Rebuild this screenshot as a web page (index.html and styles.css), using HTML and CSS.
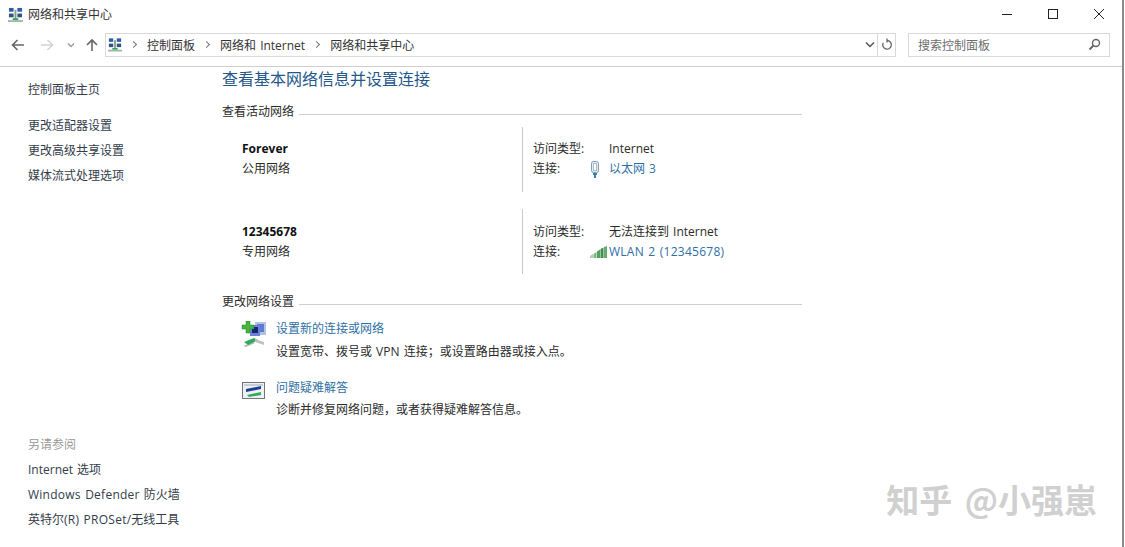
FILE: index.html
```html
<!DOCTYPE html>
<html lang="zh-CN">
    <head>
        <meta charset="utf-8">
        <title>网络和共享中心</title>
        <link rel="stylesheet" href="styles.css">
    </head>
    <body>
        <svg class="defs" width="0" height="0">
            <symbol id="netIcon" viewBox="0 0 16 16">
                <rect x="1" y="1" width="5" height="4" fill="#2f5fa8"/>
                <rect x="10" y="1" width="5" height="4" fill="#2f5fa8"/>
                <rect x="1" y="7" width="5" height="4" fill="#34517f"/>
                <rect x="10" y="7" width="5" height="4" fill="#34517f"/>
                <rect x="7" y="3" width="2" height="10" fill="#7d9a8a"/>
                <rect x="5" y="12" width="6" height="2" fill="#2fa35a"/>
                <rect x="0" y="14" width="16" height="2" fill="#9fb8a8"/>
            </symbol>
        </svg>

        <div class="window">
            <div class="titleBar">
                <svg class="appIcon"><use href="#netIcon"/></svg>
                <span class="titleText">网络和共享中心</span>
                <div class="winButtons">
                    <svg width="12" height="12" viewBox="0 0 12 12"><path d="M1 6.500h10" stroke="#222" fill="none"/></svg>
                    <svg width="12" height="12" viewBox="0 0 12 12"><rect x="1.500" y="1.500" width="9" height="9" stroke="#222" fill="none"/></svg>
                    <svg width="12" height="12" viewBox="0 0 12 12"><path d="M1 1l10 10M11 1L1 11" stroke="#222" fill="none"/></svg>
                </div>
            </div>

            <div class="addressRow">
                <div class="navButtons">
                    <svg class="navBack" width="14" height="12" viewBox="0 0 14 12"><path d="M13 6H2M6.500 1L1.500 6l5 5" stroke="#666" stroke-width="1.600" fill="none"/></svg>
                    <svg class="navForward" width="14" height="12" viewBox="0 0 14 12"><path d="M1 6h11M7.500 1l5 5-5 5" stroke="#d4d4d4" stroke-width="1.600" fill="none"/></svg>
                    <svg class="navDrop" width="8" height="6" viewBox="0 0 8 6"><path d="M1 1.500l3 3 3-3" stroke="#999" stroke-width="1.300" fill="none"/></svg>
                    <svg class="navUp" width="12" height="14" viewBox="0 0 12 14"><path d="M6 13V2M1 7l5-5 5 5" stroke="#666" stroke-width="1.600" fill="none"/></svg>
                </div>
                <div class="addressBox">
                    <svg class="crumbIcon"><use href="#netIcon"/></svg>
                    <span class="chevron"></span>
                    <span>控制面板</span>
                    <span class="chevron"></span>
                    <span>网络和 Internet</span>
                    <span class="chevron"></span>
                    <span>网络和共享中心</span>
                    <div class="addressEnd">
                        <svg class="addressDrop" width="10" height="7" viewBox="0 0 10 7"><path d="M1 1.500l4 4 4-4" stroke="#555" stroke-width="1.500" fill="none"/></svg>
                        <div class="refresh">
                            <svg width="12" height="13" viewBox="0 0 12 13"><path d="M6 2.500a4.300 4.300 0 1 1-3.800 2.400M6 .5v4" stroke="#666" stroke-width="1.300" fill="none"/></svg>
                        </div>
                    </div>
                </div>
                <div class="searchBox">
                    <span>搜索控制面板</span>
                    <svg width="13" height="13" viewBox="0 0 13 13"><circle cx="8" cy="5" r="3.500" stroke="#666" stroke-width="1.400" fill="none"/><path d="M5.500 7.500L1.500 11.500" stroke="#666" stroke-width="2" fill="none"/></svg>
                </div>
            </div>

            <div class="content">
                <div class="sidebar">
                    <ul class="sideList">
                        <li class="sideHome">控制面板主页</li>
                        <li>更改适配器设置</li>
                        <li>更改高级共享设置</li>
                        <li>媒体流式处理选项</li>
                    </ul>
                    <ul class="sideList sideBottom">
                        <li class="sideLabel">另请参阅</li>
                        <li>Internet 选项</li>
                        <li><span class="wide">Windows Defender</span> 防火墙</li>
                        <li>英特尔<span class="wide">(R) PROSet/</span>无线工具</li>
                    </ul>
                </div>

                <div class="main">
                    <h1 class="pageTitle">查看基本网络信息并设置连接</h1>

                    <div class="sectionHead">
                        <span>查看活动网络</span>
                        <div class="sectionLine"></div>
                    </div>

                    <div class="networks">
                        <div class="network">
                            <div class="netName">
                                <strong>Forever</strong>
                                <span>公用网络</span>
                            </div>
                            <div class="netInfo">
                                <div class="infoRow">
                                    <span class="infoLabel">访问类型:</span>
                                    <span class="infoIcon"></span>
                                    <span>Internet</span>
                                </div>
                                <div class="infoRow">
                                    <span class="infoLabel">连接:</span>
                                    <span class="infoIcon">
                                        <svg width="10" height="17" viewBox="0 0 10 17">
                                            <rect x="1.500" y="0.500" width="7" height="11" rx="2" fill="#e4edf3" stroke="#7f9db3"/>
                                            <rect x="3.500" y="2.500" width="3" height="7" fill="#fff" stroke="#a9bdcb"/>
                                            <rect x="3" y="12" width="4" height="2" fill="#3f7fa8"/>
                                            <rect x="4" y="14" width="2" height="3" fill="#2b86b8"/>
                                        </svg>
                                    </span>
                                    <a class="link">以太网 3</a>
                                </div>
                            </div>
                        </div>

                        <div class="network">
                            <div class="netName">
                                <strong>12345678</strong>
                                <span>专用网络</span>
                            </div>
                            <div class="netInfo">
                                <div class="infoRow">
                                    <span class="infoLabel">访问类型:</span>
                                    <span class="infoIcon"></span>
                                    <span>无法连接到 Internet</span>
                                </div>
                                <div class="infoRow">
                                    <span class="infoLabel">连接:</span>
                                    <span class="infoIcon">
                                        <svg width="17" height="12" viewBox="0 0 17 12">
                                            <path d="M0 10l3-2v4H0z" fill="#a9cfae"/>
                                            <path d="M3.500 8l3-2v6h-3z" fill="#7cb585"/>
                                            <path d="M7 5.500l3-2V12H7z" fill="#549f60"/>
                                            <path d="M10.500 3l3-1.500V12h-3z" fill="#3f8f4c"/>
                                            <path d="M14 1l3-1v12h-3z" fill="#67a873"/>
                                        </svg>
                                    </span>
                                    <a class="link wide">WLAN 2 (12345678)</a>
                                </div>
                            </div>
                        </div>
                    </div>

                    <div class="sectionHead sectionChange">
                        <span>更改网络设置</span>
                        <div class="sectionLine"></div>
                    </div>

                    <div class="tasks">
                        <div class="task">
                            <svg class="taskIcon" width="26" height="26" viewBox="0 0 26 26">
                                <rect x="14" y="1" width="11" height="13" fill="#b4c1ea"/>
                                <rect x="16" y="3" width="7" height="8" fill="#5f7ad0"/>
                                <rect x="9" y="4" width="10" height="11" fill="#6a82cf"/>
                                <rect x="11" y="6" width="6" height="6" fill="#14247a"/>
                                <path d="M5 0h4v4h4v4H9v4H5V8H1V4h4z" fill="#45b53f" stroke="#2b7f2b" stroke-width="0.500"/>
                                <path d="M2 25l10-4 2 1-9 4z" fill="#b4bbb7"/>
                                <path d="M3 21l10-4 4 2-10 5z" fill="#35a860"/>
                                <path d="M14 18l9 3v3l-9-3z" fill="#bcc3c7"/>
                            </svg>
                            <div class="taskText">
                                <a class="link">设置新的连接或网络</a>
                                <p>设置宽带、拨号或 VPN 连接；或设置路由器或接入点。</p>
                            </div>
                        </div>
                        <div class="task">
                            <svg class="taskIcon taskIconSmall" width="26" height="18" viewBox="0 0 26 18">
                                <rect x="1.500" y="0.500" width="22" height="16" fill="#eef0f3" stroke="#70757b"/>
                                <rect x="3" y="2" width="19" height="2" fill="#c9ced6"/>
                                <path d="M5 7l15-3v3L5 10z" fill="#1c3f96"/>
                                <path d="M6 13l14-3v3L8 15z" fill="#36a85e"/>
                            </svg>
                            <div class="taskText">
                                <a class="link">问题疑难解答</a>
                                <p>诊断并修复网络问题，或者获得疑难解答信息。</p>
                            </div>
                        </div>
                    </div>
                </div>
            </div>

            <div class="watermark">知乎 @小强崽</div>
        </div>
    </body>
</html>
```

FILE: styles.css
```css
html, body {
    margin: 0;
    padding: 0;
    height: 547px;
    overflow: hidden;
    background-color: #fff;
    color: #2b2b2b;
    font-family: "Open Sans", "Noto Sans CJK SC", sans-serif;
    font-size: 12px;
    word-spacing: 1px;
}

.defs {
    position: absolute;
}

.wide {
    letter-spacing: 0.25px;
}

.window {
    position: relative;
    display: flex;
    flex-direction: column;
    box-sizing: border-box;
    width: 1124px;
    height: 547px;
    border-right: 2px solid #8a8a8a;
}

/* title bar */
.titleBar {
    display: flex;
    align-items: center;
    height: 28px;
    padding-left: 8px;
}

.appIcon {
    width: 15px;
    height: 15px;
    margin-right: 5px;
}

.titleText {
    color: #333;
}

.winButtons {
    display: flex;
    gap: 34px;
    margin-left: auto;
    margin-right: 17px;
}

/* address row */
.addressRow {
    display: flex;
    align-items: center;
    box-sizing: border-box;
    height: 39px;
    padding: 5px 0 10px 11px;
    border-bottom: 1px solid #cfcfcf;
}

.navButtons {
    display: flex;
    align-items: center;
    width: 94px;
}

.navBack {
    margin-right: 15px;
}

.navForward {
    margin-right: 13px;
}

.navDrop {
    margin-right: 11px;
}

.addressBox {
    display: flex;
    align-items: center;
    box-sizing: border-box;
    width: 791px;
    height: 24px;
    padding-left: 2px;
    border: 1px solid #d9d9d9;
    color: #333;
}

.crumbIcon {
    width: 14px;
    height: 15px;
}

.chevron {
    width: 4px;
    height: 4px;
    margin: 0 11px 0 9px;
    border-top: 1px solid #777;
    border-right: 1px solid #777;
    transform: rotate(45deg);
}

.addressEnd {
    display: flex;
    align-items: center;
    height: 100%;
    margin-left: auto;
}

.addressDrop {
    margin-right: 2px;
}

.refresh {
    display: flex;
    align-items: center;
    justify-content: center;
    width: 17px;
    height: 100%;
    border-left: 1px solid #d9d9d9;
}

.searchBox {
    display: flex;
    align-items: center;
    justify-content: space-between;
    box-sizing: border-box;
    width: 202px;
    height: 24px;
    margin-left: 12px;
    padding: 0 8px 0 9px;
    border: 1px solid #d9d9d9;
    color: #6d6d6d;
}

/* content */
.content {
    display: flex;
    flex: 1;
}

.sidebar {
    display: flex;
    flex-direction: column;
    box-sizing: border-box;
    width: 222px;
    padding: 10px 0 15px 28px;
}

.sideList {
    margin: 0;
    padding: 0;
    list-style: none;
    line-height: 25px;
    color: #333c4a;
}

.sideHome {
    margin-bottom: 11px;
}

.sideBottom {
    margin-top: auto;
}

.sideLabel {
    color: #9a9a9a;
}

.main {
    width: 580px;
}

.pageTitle {
    margin: 0;
    color: #24578a;
    font-size: 16px;
    font-weight: normal;
    line-height: 24px;
}

.sectionHead {
    display: flex;
    align-items: center;
    margin-top: 11px;
    line-height: 20px;
}

.sectionLine {
    flex: 1;
    height: 1px;
    margin: 4px 0 0 5px;
    background-color: #cfcfcf;
}

.networks {
    display: flex;
    flex-direction: column;
    gap: 17px;
    margin-top: 5px;
}

.network {
    display: grid;
    grid-template-columns: 300px 1fr;
    height: 65px;
}

.netName {
    display: flex;
    flex-direction: column;
    padding: 12px 0 0 20px;
    line-height: 20px;
}

.netName strong {
    color: #111;
}

.netInfo {
    padding: 12px 0 0 10px;
    border-left: 1px solid #c9c9c9;
    line-height: 20px;
}

.network + .network .netName,
.network + .network .netInfo {
    padding-top: 13px;
}

.infoRow {
    display: flex;
    align-items: center;
}

.infoLabel {
    width: 57px;
}

.infoIcon {
    display: flex;
    align-items: center;
    width: 19px;
    height: 20px;
}

.link {
    color: #2f6fa5;
}

.sectionChange {
    margin-top: 18px;
}

.tasks {
    display: flex;
    flex-direction: column;
    gap: 16px;
    margin-top: 7px;
}

.task {
    display: flex;
    line-height: 20px;
}

.taskIcon {
    flex: none;
    width: 26px;
    margin: 2px 9px 0 19px;
}

.taskIconSmall {
    margin-top: 4px;
}

.taskText p {
    margin: 3px 0 0;
}

.task:last-child p {
    margin-top: 2px;
}

/* overlay on the screenshot, bottom right */
.watermark {
    position: absolute;
    right: 25px;
    bottom: 28px;
    color: #d0d0d0;
    font-family: "Noto Sans CJK SC", sans-serif;
    font-size: 33px;
    font-weight: 700;
    line-height: 40px;
    word-spacing: 5px;
}
```
